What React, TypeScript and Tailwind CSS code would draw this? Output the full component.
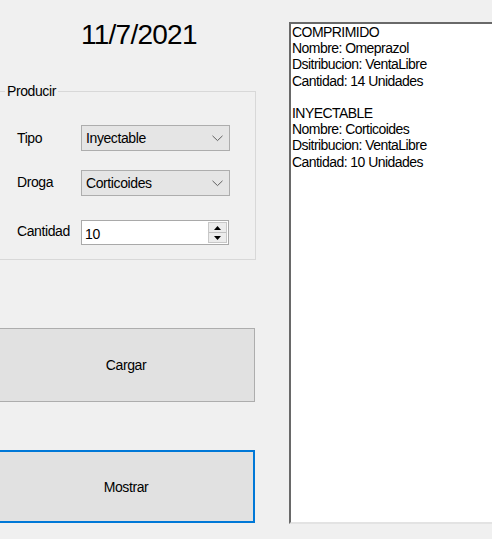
import React from "react";

const font = { fontFamily: '"Liberation Sans", Arial, sans-serif' };

function Chevron() {
  return (
    <svg width="11" height="7" viewBox="0 0 11 7" className="mr-[6px]">
      <polyline points="0.5,0.8 5.5,5.6 10.5,0.8" fill="none" stroke="#606060" strokeWidth="1" />
    </svg>
  );
}

function Combo({ value }: { value: string }) {
  return (
    <div className="w-[149px] h-[26px] border border-[#adadad] bg-[#e5e5e5] flex items-center justify-between pl-[4px]">
      <span>{value}</span>
      <Chevron />
    </div>
  );
}

function Numeric({ value }: { value: string }) {
  return (
    <div className="w-[148px] h-[25px] border border-[#a9a9a9] bg-white flex items-center justify-between pl-[3px]">
      <span className="mt-[2px]">{value}</span>
      <div className="w-[19px] h-[21px] mr-[1px] flex flex-col border border-[#c8c8c8] bg-[#ececec]">
        <div className="flex-1 flex items-center justify-center border-b border-[#c0c0c0]">
          <svg width="7" height="4" viewBox="0 0 7 4"><polygon points="3.5,0 7,4 0,4" fill="#000" /></svg>
        </div>
        <div className="flex-1 flex items-center justify-center">
          <svg width="7" height="4" viewBox="0 0 7 4"><polygon points="0,0 7,0 3.5,4" fill="#000" /></svg>
        </div>
      </div>
    </div>
  );
}

export default function App() {
  return (
    <div
      className="w-[492px] h-[539px] bg-[#f0f0f0] overflow-hidden flex text-[14px] leading-[16px] tracking-[-0.4px] text-black"
      style={font}
    >
      {/* Left column */}
      <div className="w-[260px] ml-[-5px] shrink-0 flex flex-col">
        <div className="pt-[19px] pl-[86px] text-[28px] leading-[32px] tracking-[-0.75px]">11/7/2021</div>

        <div className="relative ml-[3px] mt-[40px] w-[258px] h-[169px] border border-[#d8d8d8] flex flex-col">
          <div className="absolute top-[-9px] left-[6px] px-[2px] bg-[#f0f0f0]">Producir</div>

          <div className="flex items-center pl-[18px] mt-[33px]">
            <span className="w-[64px]">Tipo</span>
            <Combo value="Inyectable" />
          </div>
          <div className="flex items-center pl-[18px] mt-[19px]">
            <span className="w-[64px] mt-[-2px]">Droga</span>
            <Combo value="Corticoides" />
          </div>
          <div className="flex items-center pl-[18px] mt-[24px]">
            <span className="w-[64px] mt-[-3px]">Cantidad</span>
            <Numeric value="10" />
          </div>
        </div>

        <div className="mt-[68px] h-[74px] border border-[#adadad] bg-[#e1e1e1] flex items-center justify-center pl-[2px]">
          Cargar
        </div>
        <div className="mt-[48px] h-[73px] border-2 border-[#0078d7] bg-[#e1e1e1] flex items-center justify-center pl-[2px]">
          Mostrar
        </div>
      </div>

      {/* Right text box */}
      <div className="ml-[34px] mt-[22px] h-[502px] w-[230px] shrink-0 border-t-2 border-l-2 border-b-2 border-t-[#696969] border-l-[#696969] border-b-[#e3e3e3] bg-white pl-[1px] leading-[16.2px] tracking-[-0.55px]">
        <div>COMPRIMIDO</div>
        <div>Nombre: Omeprazol</div>
        <div>Dsitribucion: VentaLibre</div>
        <div>Cantidad: 14 Unidades</div>
        <div>&nbsp;</div>
        <div>INYECTABLE</div>
        <div>Nombre: Corticoides</div>
        <div>Dsitribucion: VentaLibre</div>
        <div>Cantidad: 10 Unidades</div>
      </div>
    </div>
  );
}
